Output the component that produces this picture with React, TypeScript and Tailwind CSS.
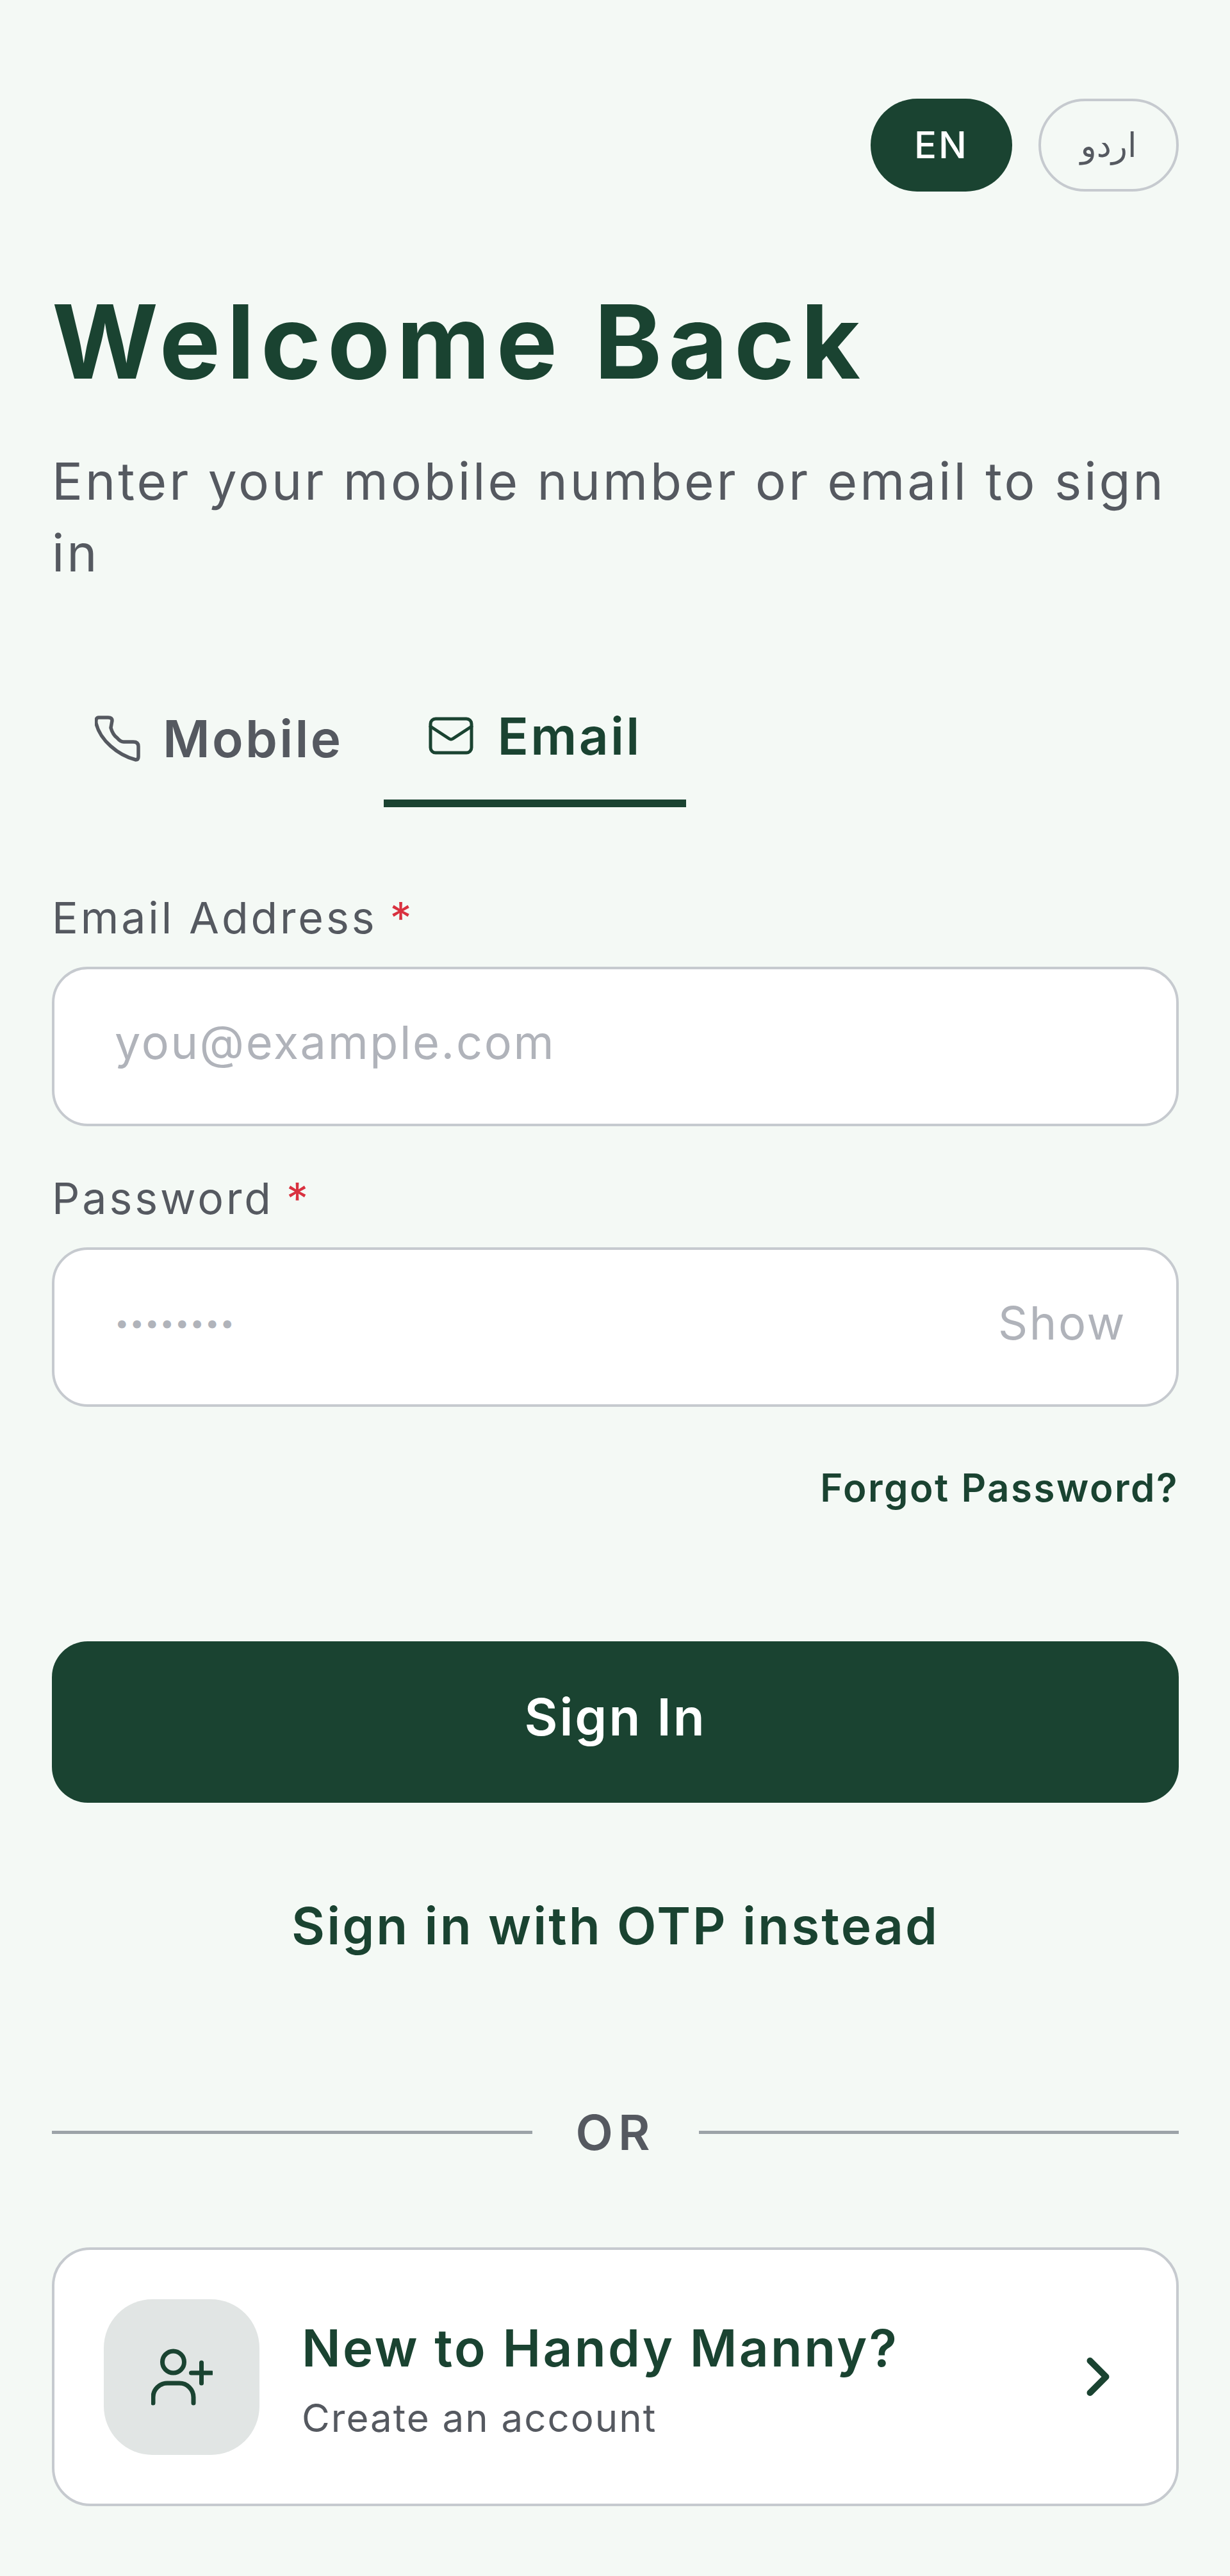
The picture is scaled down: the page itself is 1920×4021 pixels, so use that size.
import { ChevronRight } from "lucide-react";

const fontStack = "font-['Inter',sans-serif]";

function PhoneIcon() {
  return (
    <svg viewBox="0 0 72 72" className="w-[72px] h-[72px]" fill="none" stroke="#555960" strokeWidth="5.5" strokeLinejoin="round">
      <path d="M6 3h15q6 0 6 5l-2 11q3 11 10 16 5 6 10 6h15q8 0 8 7v16q0 5-4 5C36 62 8 38 2 12q-1-9 4-9z" />
    </svg>
  );
}

function MailIcon() {
  return (
    <svg viewBox="0 0 70 60" className="w-[70px] h-[60px]" fill="none" stroke="#1a4331" strokeWidth="5" strokeLinecap="round" strokeLinejoin="round">
      <rect x="3" y="3" width="64" height="53" rx="8" />
      <path d="M3 15l29 19q3 2 6 0l29-19" />
    </svg>
  );
}

function UserAdd() {
  return (
    <svg viewBox="0 0 96 96" className="w-[96px] h-[96px]" fill="none" stroke="#1a4331" strokeWidth="7" strokeLinecap="round">
      <circle cx="34.5" cy="25" r="17" />
      <path d="M3 89v-9a22 22 0 0 1 22-22h19a22 22 0 0 1 22 22v9" />
      <path d="M78.5 26v32M62.500 42h32" />
    </svg>
  );
}

function Field({ label, children, className }: { label: string; children: React.ReactNode; className?: string }) {
  return (
    <div className={className}>
      <div className="h-[84px] flex items-center text-[68px] leading-[84px] text-[#555960] tracking-[3.9px]">
        {label}
        <span className="text-[#d9313f] ml-[20px]">*</span>
      </div>
      <div className="mt-[35px] h-[249px] rounded-[56px] border-[4px] border-[#c6cacf] bg-white flex items-center justify-between pl-[94px] pr-[78px] pb-[14px] text-[72px] text-[#b0b3ba] tracking-[2.6px]">
        {children}
      </div>
    </div>
  );
}

export default function App() {
  return (
    <main className={`${fontStack} min-h-screen bg-[#f4f9f5] pl-[81px] pr-[80px] pt-[154px]`}>
      <div className="flex justify-end gap-[41px]">
        <button className="w-[221px] h-[145px] rounded-full bg-[#1a4331] text-white text-[58px] font-medium tracking-[3px]">EN</button>
        <button className="w-[219px] h-[145px] rounded-full border-[4px] border-[#c6cacf] text-[#555960] text-[52px] font-['DejaVu_Sans',sans-serif]">اردو</button>
      </div>

      <h1 className="mt-[142px] text-[160px] leading-[184px] font-bold text-[#1a4331] tracking-[9.8px]">Welcome Back</h1>
      <p className="mt-[70px] text-[80px] leading-[112px] text-[#555960] tracking-[3.96px]">
        Enter your mobile number or email to sign in
      </p>

      <div className="mt-[133px] flex text-[80px] font-semibold tracking-[3.3px]">
        <div className="w-[518px] h-[208px] pl-[67px] pb-[6px] flex items-center gap-[34px] text-[#555960]">
          <PhoneIcon />
          <span>Mobile</span>
        </div>
        <div className="w-[472px] h-[208px] pb-[2px] border-b-[12px] border-[#1a4331] flex items-center justify-center gap-[38px] text-[#1a4331]">
          <MailIcon />
          <span>Email</span>
        </div>
      </div>

      <Field label="Email Address" className="mt-[130px]">
        <input placeholder="you@example.com" className="w-full outline-none bg-transparent tracking-[2.6px] placeholder:text-[#b0b3ba]" />
      </Field>

      <Field label="Password" className="mt-[70px]">
        <span className="text-[40px] tracking-[1px]">••••••••</span>
        <span className="text-[#b0b3ba]">Show</span>
      </Field>

      <div className="mt-[86px] text-right text-[60px] leading-[80px] font-semibold text-[#1a4331] tracking-[2.5px]">Forgot Password?</div>

      <button className="mt-[200px] block w-full h-[252px] pb-[16px] rounded-[56px] bg-[#1a4331] text-white text-[80px] font-semibold tracking-[3px]">Sign In</button>

      <div className="mt-[142px] text-center text-[80px] leading-[100px] font-semibold text-[#1a4331] tracking-[3.1px]">Sign in with OTP instead</div>

      <div className="mt-[222px] flex items-center gap-[68px]">
        <div className="flex-1 h-[5px] bg-[#9ca3a8]" />
        <span className="text-[76px] leading-[100px] font-semibold text-[#555960] tracking-[8px]">OR</span>
        <div className="flex-1 h-[5px] bg-[#9ca3a8]" />
      </div>

      <div className="mt-[130px] h-[404px] rounded-[60px] border-[4px] border-[#c6cacf] bg-white flex items-center pl-[77px] pr-[72px]">
        <div className="w-[243px] h-[243px] rounded-[76px] bg-[#e1e5e4] flex items-center justify-center">
          <UserAdd />
        </div>
        <div className="ml-[66px] flex-1 pt-[11px]">
          <div className="text-[80px] leading-[100px] font-semibold text-[#1a4331] tracking-[3.3px]">New to Handy Manny?</div>
          <div className="mt-[17px] text-[60px] leading-[84px] text-[#555960] tracking-[2px]">Create an account</div>
        </div>
        <ChevronRight className="w-[100px] h-[100px] text-[#1a4331]" strokeWidth={2.4} />
      </div>
    </main>
  );
}
